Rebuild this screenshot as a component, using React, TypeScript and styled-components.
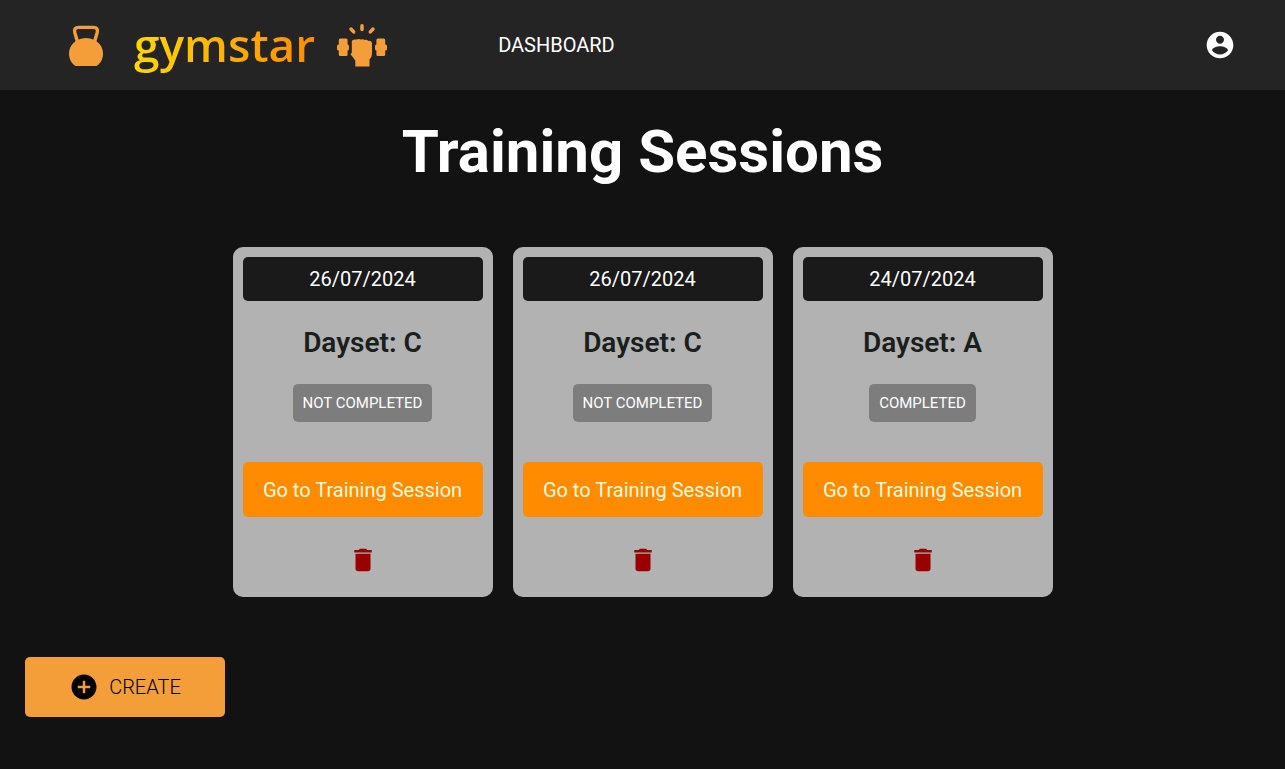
import React from "react";
import styled, { createGlobalStyle } from "styled-components";
import { MdAddCircle, MdDelete } from "react-icons/md";

const GlobalStyle = createGlobalStyle`
  *, *::before, *::after { box-sizing: border-box; }
  body {
    margin: 0;
    min-height: 100vh;
    background: #121212;
    color: #fff;
    font-family: Roboto, "Liberation Sans", sans-serif;
  }
`;

const Header = styled.header`
  display: flex;
  align-items: center;
  height: 90px;
  padding: 0 49px 0 69px;
  background: #242424;
`;

const Brand = styled.a`
  display: flex;
  align-items: center;
  color: #f39e38;
  text-decoration: none;
`;

const Wordmark = styled.span`
  margin: 0 22px 0 31px;
  padding-bottom: 2px;
  font-family: "Open Sans", sans-serif;
  font-size: 46px;
  font-weight: 600;
  line-height: 64px;
  color: transparent;
  background: linear-gradient(to right, #ffd700, #ff8c00);
  background-clip: text;
`;

const Nav = styled.nav`
  flex: 1;
  margin-left: 111px;
`;

const NavLink = styled.a`
  color: #fff;
  font-size: 20px;
  line-height: 24px;
  text-decoration: none;
`;

const IconButton = styled.button<{ $color: string }>`
  display: flex;
  padding: 0;
  border: 0;
  background: none;
  color: ${(p) => p.$color};
  cursor: pointer;
`;

const Main = styled.main`
  display: flex;
  flex-direction: column;
  padding: 26px 25px 50px;
`;

const Title = styled.h1`
  margin: 0 0 60px;
  font-size: 60px;
  font-weight: 700;
  line-height: 71px;
  text-align: center;
`;

const Cards = styled.section`
  display: flex;
  flex-wrap: wrap;
  justify-content: center;
  gap: 20px;
`;

const Card = styled.article`
  display: flex;
  flex-direction: column;
  align-items: center;
  width: 260px;
  padding: 10px 10px 22px;
  border-radius: 10px;
  background: #b2b2b2;
`;

const SessionDate = styled.time`
  align-self: stretch;
  padding: 10px;
  border-radius: 5px;
  background: #1a1a1a;
  font-size: 20px;
  line-height: 24px;
  text-align: center;
`;

const Dayset = styled.h2`
  margin: 25px 0;
  color: #1a1e1c;
  font-size: 28px;
  font-weight: 600;
  line-height: 33px;
`;

const Status = styled.span`
  margin-bottom: 40px;
  padding: 10px;
  border-radius: 5px;
  background: #7d7d7d;
  font-size: 15px;
  line-height: 18px;
`;

const SessionLink = styled.a`
  align-self: stretch;
  margin-bottom: 28px;
  padding: 16px 10px 15px;
  border-radius: 5px;
  background: #ff8c00;
  color: #fff8dc;
  font-size: 20px;
  line-height: 24px;
  text-align: center;
  text-decoration: none;
`;

const CreateButton = styled.button`
  display: flex;
  align-items: center;
  justify-content: center;
  gap: 10px;
  width: 200px;
  height: 60px;
  margin-top: 60px;
  border: 0;
  border-radius: 5px;
  background: #f39e38;
  color: #000;
  font-family: inherit;
  font-size: 20px;
  font-weight: 300;
  cursor: pointer;
`;

const Kettlebell = () => (
  <svg width="34" height="44" viewBox="0 0 34 44" aria-hidden="true">
    <path
      d="M8.500 19 5.800 9.500Q4.500 4.400 9.500 4.400h15q5 0 3.700 5.100L25.500 19"
      fill="none"
      stroke="currentColor"
      strokeWidth="3.400"
    />
    <path
      d="M9 16.800Q17 13 25 16.800C31 20 34 25 34 30.500c0 5.500-2.500 10-6.500 12.500h-21C2.500 40.500 0 36 0 30.500 0 25 3 20 9 16.800Z"
      fill="currentColor"
    />
  </svg>
);

const Fist = () => (
  <svg width="50" height="43" viewBox="0 0 50 43" fill="currentColor" aria-hidden="true">
    <path
      d="M25 1.800v3.800M14 5l2.700 2.900M36 5l-2.700 2.900"
      stroke="currentColor"
      strokeWidth="3.500"
      strokeLinecap="round"
    />
    <rect x="1.800" y="14.500" width="8.800" height="17.500" rx="1.500" />
    <rect x="0" y="20.500" width="12" height="6" rx="1.500" />
    <rect x="39.400" y="14.500" width="8.800" height="17.500" rx="1.500" />
    <rect x="38" y="20.500" width="12" height="6" rx="1.500" />
    <path d="M14.800 17q1-2 4-1.500h1q2-1 4 0 2.500-.8 4 .5 2-.8 3.500 1 3-.8 3.700 2V30q0 3-2.500 5.500V42.500H18.300v-6L15 32l-1.500-1.500 1.300-2Z" />
  </svg>
);

const Account = () => (
  <svg width="32" height="32" viewBox="0 0 24 24" fill="currentColor" aria-hidden="true">
    <path d="M12 2C6.480 2 2 6.480 2 12s4.480 10 10 10 10-4.480 10-10S17.520 2 12 2zm0 3c1.660 0 3 1.340 3 3s-1.340 3-3 3-3-1.340-3-3 1.340-3 3-3zm0 14.200c-2.500 0-4.710-1.280-6-3.220.030-1.990 4-3.080 6-3.080 1.990 0 5.970 1.090 6 3.080-1.290 1.940-3.500 3.220-6 3.220z" />
  </svg>
);

const sessions = [
  { id: 3, date: "26/07/2024", iso: "2024-07-26", dayset: "C", completed: false },
  { id: 2, date: "26/07/2024", iso: "2024-07-26", dayset: "C", completed: false },
  { id: 1, date: "24/07/2024", iso: "2024-07-24", dayset: "A", completed: true },
];

export default function App() {
  return (
    <>
      <GlobalStyle />
      <Header>
        <Brand href="#home">
          <Kettlebell />
          <Wordmark>gymstar</Wordmark>
          <Fist />
        </Brand>
        <Nav>
          <NavLink href="#dashboard">DASHBOARD</NavLink>
        </Nav>
        <IconButton type="button" $color="#fff" aria-label="Account">
          <Account />
        </IconButton>
      </Header>
      <Main>
        <Title>Training Sessions</Title>
        <Cards>
          {sessions.map((s) => (
            <Card key={s.id}>
              <SessionDate dateTime={s.iso}>{s.date}</SessionDate>
              <Dayset>Dayset: {s.dayset}</Dayset>
              <Status>{s.completed ? "COMPLETED" : "NOT COMPLETED"}</Status>
              <SessionLink href={`#session-${s.id}`}>Go to Training Session</SessionLink>
              <IconButton type="button" $color="#990000" aria-label="Delete session">
                <MdDelete size={30} />
              </IconButton>
            </Card>
          ))}
        </Cards>
        <CreateButton type="button">
          <MdAddCircle size={30} />
          CREATE
        </CreateButton>
      </Main>
    </>
  );
}
